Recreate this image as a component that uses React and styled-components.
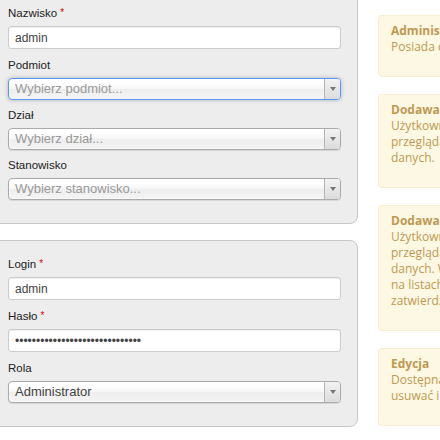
import React from 'react'
import styled, { createGlobalStyle } from 'styled-components'

const GlobalStyle = createGlobalStyle`
  body {
    margin: 0;
    overflow: hidden;
    background: #fff;
    font-family: "Liberation Sans", Arial, sans-serif;
  }
`

const roles = [
    {
        title: 'Administrator',
        lines: ['Posiada dostęp do wszystkich funkcji systemu.'],
    },
    {
        title: 'Dodawanie zgłoszeń',
        lines: [
            'Użytkownik może dodawać zgłoszenia oraz',
            'przeglądać własne zgłoszenia w bazie',
            'danych.',
        ],
    },
    {
        title: 'Dodawanie i zatwierdzanie',
        lines: [
            'Użytkownik może dodawać zgłoszenia oraz',
            'przeglądać wszystkie zgłoszenia w bazie',
            'danych. Widzi zgłoszenia swojego działu',
            'na listach i może je',
            'zatwierdzać.',
        ],
    },
    {
        title: 'Edycja',
        lines: ['Dostępna tylko dla administratora. Może', 'usuwać i edytować wpisy.'],
    },
]

function Label({ children, required }) {
    return (
        <LabelText>
            {children}
            {required && <Star>*</Star>}
        </LabelText>
    )
}

function Chosen({ value, placeholder, focused }) {
    return (
        <ChosenBox $focused={focused}>
            <ChosenText $placeholder={!value}>{value || placeholder}</ChosenText>
            <ChosenArrow>
                <Tri />
            </ChosenArrow>
        </ChosenBox>
    )
}

function App() {
    return (
        <Page>
            <GlobalStyle />
            <LeftCol>
                <Panel $cut>
                    <Label required>Nazwisko</Label>
                    <Input readOnly value="admin" />
                    <Label>Podmiot</Label>
                    <Chosen placeholder="Wybierz podmiot..." focused />
                    <Label>Dział</Label>
                    <Chosen placeholder="Wybierz dział..." />
                    <Label>Stanowisko</Label>
                    <Chosen placeholder="Wybierz stanowisko..." />
                </Panel>
                <Panel>
                    <Label required>Login</Label>
                    <Input readOnly value="admin" />
                    <Label required>Hasło</Label>
                    <Input type="password" readOnly value="123456789012345678901234567890" />
                    <Label>Rola</Label>
                    <Chosen value="Administrator" />
                </Panel>
            </LeftCol>
            <RightCol>
                {roles.map((r) => (
                    <Alert key={r.title + r.lines.length}>
                        <AlertTitle>{r.title}</AlertTitle>
                        {r.lines.map((l, i) => (
                            <AlertLine key={i}>{l}</AlertLine>
                        ))}
                    </Alert>
                ))}
            </RightCol>
        </Page>
    )
}

export default App

const Page = styled.div`
display: flex;
align-items: flex-start;
width: 700px;
`

const LeftCol = styled.div`
flex: 0 0 368px;
margin-left: -10px;
display: flex;
flex-direction: column;
gap: 16px;
`

const Panel = styled.div`
box-sizing: border-box;
width: 368px;
background: #ededed;
border: 1px solid #c8c8c8;
border-radius: 8px;
padding: ${(p) => (p.$cut ? '24px' : '15px')} 16px 23px 17px;
margin-top: ${(p) => (p.$cut ? '-20px' : '0')};
display: flex;
flex-direction: column;
`

const LabelText = styled.label`
display: block;
height: 16px;
font-size: 11.5px;
line-height: 16px;
color: #222;
margin-bottom: 5px;
`

const Star = styled.span`
color: #e10000;
margin-left: 3px;
font-size: 10px;
line-height: 0;
vertical-align: 1px;
`

const Input = styled.input`
box-sizing: border-box;
height: 23px;
width: 100%;
margin: 0 0 8px;
padding: 0 6px;
border: 1px solid #ccc;
border-radius: 3px;
background: #fff;
box-shadow: inset 0 1px 1px rgba(0, 0, 0, 0.075);
font-family: "Liberation Sans", Arial, sans-serif;
font-size: 12px;
color: #444;
outline: none;
&:last-child {
    margin-bottom: 0;
}
`

const ChosenBox = styled.div`
box-sizing: border-box;
display: flex;
height: 22px;
margin-bottom: 7px;
border: 1px solid ${(p) => (p.$focused ? '#5897fb' : '#aaa')};
border-radius: 4px;
overflow: hidden;
background: linear-gradient(#fff 20%, #f6f6f6 50%, #eee 52%, #f4f4f4 100%);
box-shadow: ${(p) =>
    p.$focused
        ? '0 0 4px rgba(0, 0, 0, 0.25)'
        : 'inset 0 0 3px #fff, 0 1px 1px rgba(0, 0, 0, 0.1)'};
&:last-child {
    margin-bottom: 0;
}
`

const ChosenText = styled.span`
flex: 1;
padding: 0 6px;
font-size: 13px;
line-height: 20px;
color: ${(p) => (p.$placeholder ? '#999' : '#444')};
white-space: nowrap;
overflow: hidden;
`

const ChosenArrow = styled.div`
flex: 0 0 15px;
display: flex;
align-items: center;
justify-content: center;
border-left: 1px solid #b4b4b4;
background: linear-gradient(#f2f2f2, #dcdcdc);
`

const Tri = styled.span`
width: 0;
height: 0;
border-left: 3px solid transparent;
border-right: 3px solid transparent;
border-top: 4px solid #777;
`

const RightCol = styled.div`
flex: 0 0 260px;
margin-left: 20px;
padding-top: 15px;
display: flex;
flex-direction: column;
gap: 17px;
`

const Alert = styled.div`
background: #fcf8e3;
border: 1px solid #f7ecd0;
border-radius: 4px;
padding: 7px 12px 21px;
font-family: "Open Sans", "Liberation Sans", sans-serif;
font-size: 12px;
line-height: 16px;
color: #c09853;
`

const AlertTitle = styled.div`
font-weight: bold;
white-space: nowrap;
`

const AlertLine = styled.div`
white-space: nowrap;
`
